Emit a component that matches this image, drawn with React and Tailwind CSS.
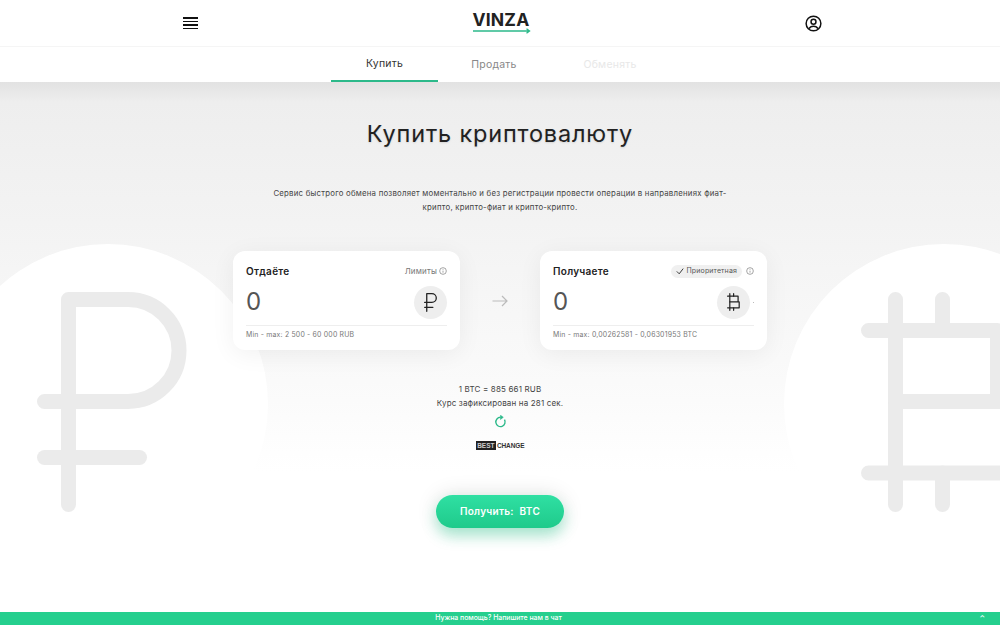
import React from 'react';

function RubleIcon({ className }) {
    return (
        <svg viewBox="0 0 150 220" fill="none" stroke="currentColor" strokeWidth="15" strokeLinecap="round" strokeLinejoin="round" className={className}>
            <path d="M31.5 212.5V7.5H91a51 51 0 0 1 0 102H7.5" />
            <path d="M7.5 165.5H102.5" />
        </svg>
    );
}

function BitcoinIcon({ className }) {
    return (
        <svg viewBox="0 0 160 220" fill="none" stroke="currentColor" strokeWidth="15" strokeLinecap="round" strokeLinejoin="round" className={className}>
            <path d="M34.5 7.5V212.5M81.5 7.5V38M81.5 181V212.5" />
            <path d="M7.5 38.5H136.5V109.5M34.5 109.5H150V181H7.5" />
        </svg>
    );
}

function InfoIcon() {
    return (
        <svg viewBox="0 0 12 12" fill="none" stroke="#777" strokeWidth="1" className="w-[8px] h-[8px]">
            <circle cx="6" cy="6" r="5" />
            <path d="M6 5.5V8.5M6 3.2V4.2" />
        </svg>
    );
}

function Card({ title, right, currency, limits }) {
    return (
        <div className="w-[227px] h-[99px] bg-white rounded-xl shadow-[0_4px_24px_rgba(0,0,0,0.06)] px-[13px] pt-[13px]">
            <div className="flex items-center justify-between h-[14px]">
                <span className="text-[10px] font-semibold tracking-[0.03em] text-[#222]">{title}</span>
                {right}
            </div>
            <div className="flex items-center justify-between h-[36px] mt-[6px]">
                <span className="text-[24px] leading-none text-[#555]">0</span>
                {currency}
            </div>
            <div className="border-t border-[#eeeeee] mt-[5px] pt-[4px] text-[6.9px] tracking-[0.03em] text-[#777]">{limits}</div>
        </div>
    );
}

export default function App() {
    return (
        <div className="relative h-[625px] w-[1000px] flex flex-col overflow-hidden bg-white text-[#222] font-['Inter','Liberation_Sans',sans-serif]">
            <header className="h-[46px] flex items-center justify-between pl-[183px] pr-[178px] shrink-0">
                <div className="flex flex-col gap-[2px] w-[15px]">
                    <span className="h-[1.5px] bg-[#111]" />
                    <span className="h-[1.5px] bg-[#111]" />
                    <span className="h-[1.5px] bg-[#111]" />
                    <span className="h-[1.5px] bg-[#111]" />
                </div>
                <div className="flex flex-col items-start w-[58px] mt-[-1px]">
                    <span className="text-[17.5px] leading-[17px] font-bold tracking-[0.01em] text-[#222]">VINZA</span>
                    <svg viewBox="0 0 58 6" className="w-[58px] h-[6px]" fill="none" stroke="#2cb98a" strokeWidth="1.4">
                        <path d="M0 3H56M53.5 0.8L56.5 3L53.5 5.2" />
                    </svg>
                </div>
                <svg viewBox="0 0 18 18" fill="none" stroke="#111" strokeWidth="1.6" className="w-[17px] h-[17px]">
                    <circle cx="9" cy="9" r="7.8" />
                    <circle cx="9" cy="7.2" r="2.6" />
                    <path d="M4.3 14.6C5.2 12.6 7 12 9 12S12.8 12.6 13.7 14.6" />
                </svg>
            </header>

            <nav className="h-[36px] flex pl-[331px] shrink-0 border-t border-[#f5f5f5] text-[10.5px] tracking-[0.02em] z-10 bg-white">
                <a className="w-[107px] flex items-center justify-center text-[#333] border-b-2 border-[#2cb98a] pt-[1px]">Купить</a>
                <a className="w-[112px] flex items-center justify-center text-[#888]">Продать</a>
                <a className="w-[120px] flex items-center justify-center text-[#e8e8e8]">Обменять</a>
            </nav>

            <main className="relative flex-1 flex flex-col items-center bg-[linear-gradient(180deg,#e2e2e2_0,#eeeeee_20px,#f4f4f4_165px,#fafafa_300px,#ffffff_390px)] overflow-hidden">
                {/* Круги и символы на фоне */}
                <div className="absolute left-[-52px] top-[162px] w-[320px] h-[320px] rounded-full bg-white" />
                <div className="absolute left-[784px] top-[162px] w-[320px] h-[320px] rounded-full bg-white" />
                <RubleIcon className="absolute left-[37px] top-[210px] w-[150px] h-[220px] text-[#ebebeb]" />
                <BitcoinIcon className="absolute left-[861px] top-[210px] w-[160px] h-[220px] text-[#ebebeb]" />

                <div className="relative flex flex-col items-center">
                    <h1 className="mt-[36px] text-[23.5px] leading-[32px] tracking-[0.035em] font-normal text-[#222] [text-shadow:0_1px_2px_rgba(0,0,0,0.12)]">Купить криптовалюту</h1>
                    <p className="mt-[36px] w-[480px] text-center text-[7.8px] leading-[14px] tracking-[0.03em] text-[#444]">
                        Сервис быстрого обмена позволяет моментально и без регистрации провести операции в направлениях фиат-
                        <br />
                        крипто, крипто-фиат и крипто-крипто.
                    </p>

                    <div className="mt-[37px] flex items-center">
                        <Card
                            title="Отдаёте"
                            right={
                                <span className="flex items-center gap-[2px] text-[8px] tracking-[0.02em] text-[#777]">
                                    Лимиты <InfoIcon />
                                </span>
                            }
                            currency={
                                <span className="w-[33px] h-[33px] rounded-full bg-[#eeeeee] flex items-center justify-center text-[#222]">
                                    <RubleIcon className="w-[13px] h-[19px]" />
                                </span>
                            }
                            limits="Min - max: 2 500 - 60 000 RUB"
                        />
                        <div className="w-[80px] flex justify-center">
                            <svg viewBox="0 0 16 12" fill="none" stroke="#bbbbbb" strokeWidth="1.2" className="w-[16px] h-[12px]">
                                <path d="M0.5 6H15M10 1L15 6L10 11" />
                            </svg>
                        </div>
                        <Card
                            title="Получаете"
                            right={
                                <span className="flex items-center gap-[4px]">
                                    <span className="flex items-center gap-[3px] h-[13px] px-[5px] rounded-full bg-[#f0f0f0] text-[7px] tracking-[0.02em] text-[#555]">
                                        <svg viewBox="0 0 10 10" fill="none" stroke="#333" strokeWidth="1.2" className="w-[8px] h-[8px]">
                                            <path d="M1 5.5L4 8.5L9 2" />
                                        </svg>
                                        Приоритетная
                                    </span>
                                    <InfoIcon />
                                </span>
                            }
                            currency={
                                <span className="flex items-center gap-[3px]">
                                    <span className="w-[33px] h-[33px] rounded-full bg-[#eeeeee] flex items-center justify-center text-[#222]">
                                        <BitcoinIcon className="w-[13px] h-[18px]" />
                                    </span>
                                    <span className="w-[1px] h-[1px] bg-[#bbbbbb]" />
                                </span>
                            }
                            limits="Min - max: 0,00262581 - 0,06301953 BTC"
                        />
                    </div>

                    <div className="mt-[32px] text-center text-[8px] leading-[14px] tracking-[0.02em] text-[#444]">
                        <div>1 BTC = 885 661 RUB</div>
                        <div>Курс зафиксирован на 281 сек.</div>
                    </div>

                    <svg viewBox="0 0 14 14" fill="none" stroke="#2cb98a" strokeWidth="1.5" className="w-[13px] h-[13px] mt-[5px]">
                        <path d="M7 2.5A5 5 0 1 0 11.3 5" />
                        <path d="M7 0.2V4.8L10 2.5Z" fill="#2cb98a" strokeWidth="0.6" />
                    </svg>

                    <div className="mt-[13px] flex items-center gap-[1px] text-[6.5px] leading-[9px] font-bold font-['Liberation_Sans',sans-serif]">
                        <span className="h-[9px] bg-[#222] text-[#ccc] px-[1.5px]">BEST</span>
                        <span className="text-[#333] tracking-[-0.02em]">CHANGE</span>
                    </div>

                    <button className="mt-[45px] w-[128px] h-[33px] rounded-full bg-gradient-to-b from-[#2fe0a3] to-[#1fca8b] text-white text-[10px] font-semibold tracking-[0.03em] shadow-[0_8px_14px_rgba(34,207,144,0.35),0_0_22px_rgba(0,0,0,0.12)]">
                        Получить:&nbsp; BTC
                    </button>
                </div>
            </main>

            <footer className="relative h-[13px] shrink-0 bg-[#25cf8e] flex items-center justify-center text-[6.9px] font-medium text-white pr-[3px]">
                Нужна помощь? Напишите нам в чат
                <span className="absolute right-[15px] text-[7px] leading-none">⌃</span>
            </footer>
        </div>
    );
}
